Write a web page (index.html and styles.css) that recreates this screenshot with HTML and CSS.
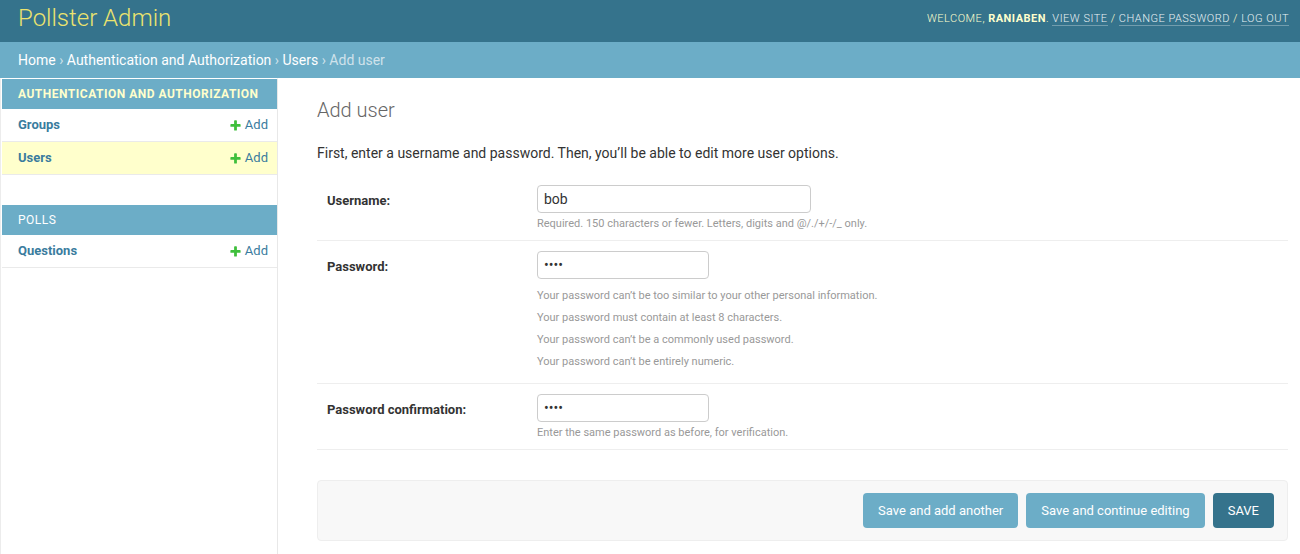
FILE: index.html
```html
<!DOCTYPE html>
<html lang="en">
<head>
<meta charset="utf-8">
<title>Add user | Pollster Admin</title>
<link rel="stylesheet" href="styles.css">
</head>
<body>
<div class="page">
  <header class="header">
    <div class="branding">Pollster Admin</div>
    <div class="user-tools">Welcome, <strong>raniaben</strong>. <a href="#">View site</a> / <a href="#">Change password</a> / <a href="#">Log out</a></div>
  </header>
  <nav class="breadcrumbs"><a href="#">Home</a> › <a href="#">Authentication and Authorization</a> › <a href="#">Users</a> › Add user</nav>
  <div class="main">
    <aside class="sidebar">
      <div class="module current-app">
        <div class="caption"><a href="#" class="section">Authentication and Authorization</a></div>
        <div class="model-row"><a href="#" class="model">Groups</a><a href="#" class="addlink"><svg class="plus" viewBox="0 0 1792 1792" width="13" height="13"><path d="M1600 796v192q0 40-28 68t-68 28h-416v416q0 40-28 68t-68 28h-192q-40 0-68-28t-28-68v-416h-416q-40 0-68-28t-28-68v-192q0-40 28-68t68-28h416v-416q0-40 28-68t68-28h192q40 0 68 28t28 68v416h416q40 0 68 28t28 68z"/></svg>Add</a></div>
        <div class="model-row current-model"><a href="#" class="model">Users</a><a href="#" class="addlink"><svg class="plus" viewBox="0 0 1792 1792" width="13" height="13"><path d="M1600 796v192q0 40-28 68t-68 28h-416v416q0 40-28 68t-68 28h-192q-40 0-68-28t-28-68v-416h-416q-40 0-68-28t-28-68v-192q0-40 28-68t68-28h416v-416q0-40 28-68t68-28h192q40 0 68 28t28 68v416h416q40 0 68 28t28 68z"/></svg>Add</a></div>
      </div>
      <div class="module">
        <div class="caption"><a href="#" class="section">Polls</a></div>
        <div class="model-row"><a href="#" class="model">Questions</a><a href="#" class="addlink"><svg class="plus" viewBox="0 0 1792 1792" width="13" height="13"><path d="M1600 796v192q0 40-28 68t-68 28h-416v416q0 40-28 68t-68 28h-192q-40 0-68-28t-28-68v-416h-416q-40 0-68-28t-28-68v-192q0-40 28-68t68-28h416v-416q0-40 28-68t68-28h192q40 0 68 28t28 68v416h416q40 0 68 28t28 68z"/></svg>Add</a></div>
      </div>
    </aside>
    <main class="content">
      <h1 class="title">Add user</h1>
      <p class="intro">First, enter a username and password. Then, you’ll be able to edit more user options.</p>
      <form class="form">
        <fieldset class="fieldset">
          <div class="form-row">
            <label class="label" for="u">Username:</label>
            <div class="field">
              <input class="input input-wide" id="u" type="text" value="bob">
              <div class="help">Required. 150 characters or fewer. Letters, digits and @/./+/-/_ only.</div>
            </div>
          </div>
          <div class="form-row">
            <label class="label" for="p1">Password:</label>
            <div class="field">
              <input class="input input-narrow" id="p1" type="password" value="abcd">
              <ul class="help help-list">
                <li>Your password can’t be too similar to your other personal information.</li>
                <li>Your password must contain at least 8 characters.</li>
                <li>Your password can’t be a commonly used password.</li>
                <li>Your password can’t be entirely numeric.</li>
              </ul>
            </div>
          </div>
          <div class="form-row">
            <label class="label" for="p2">Password confirmation:</label>
            <div class="field">
              <input class="input input-narrow" id="p2" type="password" value="abcd">
              <div class="help">Enter the same password as before, for verification.</div>
            </div>
          </div>
        </fieldset>
        <div class="submit-row">
          <button type="button" class="btn">Save and add another</button>
          <button type="button" class="btn">Save and continue editing</button>
          <button type="button" class="btn btn-default">Save</button>
        </div>
      </form>
    </main>
  </div>
</div>
</body>
</html>
```

FILE: styles.css
```css
* { box-sizing: border-box; }
html, body { margin: 0; padding: 0; }
body {
  font-family: Roboto, "Liberation Sans", Arial, sans-serif;
  font-size: 14px;
  color: #333;
  background: #fff;
}
a { text-decoration: none; }
.page { display: flex; flex-direction: column; height: 554px; overflow: hidden; }

.header {
  height: 42px;
  flex: 0 0 42px;
  background: #35738c;
  display: flex;
  align-items: center;
  justify-content: space-between;
  padding: 0 11px 0 18px;
}
.branding {
  font-size: 24px;
  font-weight: 300;
  line-height: 28px;
  color: #ece36e;
  margin-top: -6px;
}
.user-tools {
  font-size: 11px;
  font-weight: 300;
  letter-spacing: 0.5px;
  text-transform: uppercase;
  color: #ffffcc;
  line-height: 14px;
  margin-top: -4px;
}
.user-tools strong { font-weight: 700; color: #ffffcc; }
.user-tools a {
  color: #e8f0f3;
  border-bottom: 1px solid rgba(255,255,255,0.3);
}

.breadcrumbs {
  flex: 0 0 36px;
  background: #6cadc7;
  padding: 10px 18px;
  font-size: 14px;
  line-height: 16px;
  color: #cfe2eb;
}
.breadcrumbs a { color: #fff; }

.main { display: flex; flex: 1; min-height: 0; }

.sidebar {
  flex: 0 0 278px;
  width: 278px;
  border-left: 1px solid #ececec;
  padding-left: 1px;
  border-right: 1px solid #e8e8e8;
  border-top: 1px solid transparent;
}
.module { margin-bottom: 30px; }
.caption {
  background: #6cadc7;
  padding: 8px 16px;
  font-size: 12px;
  line-height: 14px;
  letter-spacing: 0.5px;
  text-transform: uppercase;
  white-space: nowrap;
}
.caption .section { color: #fff; font-weight: 400; }
.current-app .caption .section { color: #ffffcc; font-weight: 700; }
.model-row {
  display: flex;
  justify-content: space-between;
  align-items: center;
  padding: 8px 9px 8px 16px;
  line-height: 16px;
  font-size: 13px;
  border-bottom: 1px solid #eaeaea;
}
.current-model { background: #ffffcc; }
.model { color: #3a7c9e; font-weight: 700; }
.addlink { color: #3a7c9e; display: flex; align-items: center; }
.plus { fill: #3fbf3c; margin-right: 3px; }

.content {
  flex: 1;
  padding: 20px 12px 0 39px;
  min-width: 0;
}
.title {
  margin: 0 0 23px;
  font-size: 20px;
  font-weight: 300;
  line-height: 24px;
  color: #666;
}
.intro { margin: 0 0 14px; line-height: 16px; font-size: 14px; color: #333; }

.form { margin: 0; }
.fieldset { border: none; margin: 0 0 30px; padding: 0; min-width: 0; }
.form-row {
  display: flex;
  padding: 10px;
  border-bottom: 1px solid #eee;
  font-size: 13px;
}
.label {
  flex: 0 0 210px;
  font-weight: 700;
  color: #333;
  font-size: 13px;
  line-height: 15px;
  padding-top: 8px;
}
.field { display: flex; flex-direction: column; align-items: flex-start; }
.input {
  height: 28px;
  border: 1px solid #ccc;
  border-radius: 4px;
  padding: 5px 6px;
  font-family: Roboto, "Liberation Sans", Arial, sans-serif;
  font-size: 14px;
  color: #333;
  background: #fff;
  margin: 0;
}
.input-wide { width: 274px; }
.input-narrow { width: 172px; }
.help {
  font-size: 11px;
  line-height: 13px;
  color: #999;
  margin-top: 4px;
}
.help-list {
  list-style: none;
  padding: 0;
  margin: 10px 0 5px;
}
.help-list li { margin-bottom: 9px; }
.help-list li:last-child { margin-bottom: 0; }

.submit-row {
  display: flex;
  justify-content: flex-end;
  gap: 8px;
  padding: 12px 13px;
  background: #f8f8f8;
  border: 1px solid #eee;
  border-radius: 4px;
}
.btn {
  font-family: Roboto, "Liberation Sans", Arial, sans-serif;
  font-size: 13px;
  line-height: 15px;
  padding: 10px 15px;
  border: none;
  border-radius: 4px;
  background: #6cadc7;
  color: #fff;
  cursor: pointer;
}
.btn-default { background: #35738c; text-transform: uppercase; }
```
